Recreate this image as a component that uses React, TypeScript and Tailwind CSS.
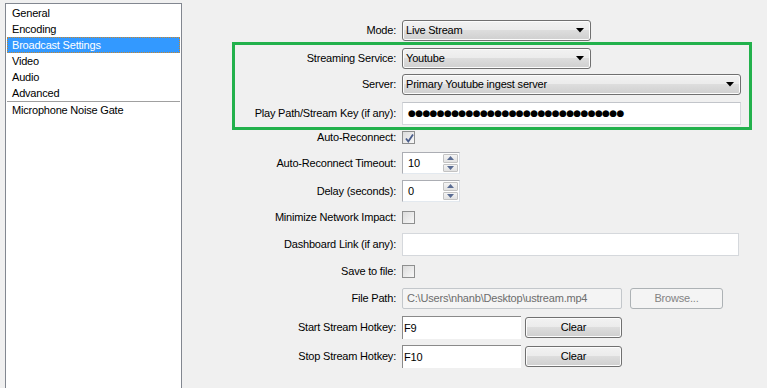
import React from "react";

const items = ["General", "Encoding", "Broadcast Settings", "Video", "Audio", "Advanced"];

function Arrow() {
  return (
    <svg width="8" height="5" viewBox="0 0 8 5">
      <path d="M0 0H8L4 4.5Z" fill="#000" />
    </svg>
  );
}

function Combo({ value, width }: { value: string; width: string }) {
  return (
    <div
      className={`${width} h-[21px] flex items-center justify-between rounded-[3px] border border-[#707070] bg-[linear-gradient(#f2f2f2,#ebebeb_50%,#dddddd_50%,#cfcfcf)] pl-[3px] pr-[6px] shadow-[inset_0_0_0_1px_#fcfcfc]`}
    >
      <span>{value}</span>
      <Arrow />
    </div>
  );
}

function Check({ checked }: { checked?: boolean }) {
  return (
    <div className="w-[13px] h-[13px] border border-[#8e8f8f] bg-[linear-gradient(135deg,#dcdcdc,#f7f7f7)] p-[1px]">
      {checked && (
        <svg width="11" height="11" viewBox="0 0 11 11">
          <path d="M2 5.5L4.3 8.5L9 1.5" stroke="#4a5d8a" strokeWidth="1.8" fill="none" />
        </svg>
      )}
    </div>
  );
}

function SpinBtn({ up }: { up?: boolean }) {
  return (
    <div className="flex-1 flex items-center justify-center border border-[#c3c3c3] rounded-[1px] bg-[linear-gradient(#f4f4f4,#e2e2e2)]">
      <svg width="7" height="4" viewBox="0 0 7 4">
        <path d={up ? "M0 4H7L3.5 0Z" : "M0 0H7L3.5 4Z"} fill="#5a6c93" />
      </svg>
    </div>
  );
}

function Spin({ value }: { value: string }) {
  return (
    <div className="w-[58px] h-[22px] flex border border-[#abadb3] border-b-[#e3e9ef] border-r-[#dbdfe6] bg-white">
      <div className="flex-1 pl-[5px] flex items-center">{value}</div>
      <div className="w-[17px] flex flex-col gap-[1px] p-[1px]">
        <SpinBtn up />
        <SpinBtn />
      </div>
    </div>
  );
}

function Row({
  label,
  wide,
  className,
  children,
}: {
  label: string;
  wide?: boolean;
  className: string;
  children: React.ReactNode;
}) {
  return (
    <div className={`flex items-center ${className}`}>
      <div className={`${wide ? "w-[220px]" : "w-[167px]"} shrink-0 text-right pr-[6px] whitespace-nowrap`}>{label}</div>
      {children}
    </div>
  );
}

function Button({ label, disabled }: { label: string; disabled?: boolean }) {
  return disabled ? (
    <div className="w-[93px] h-[21px] flex items-center justify-center rounded-[3px] border border-[#adb2b5] bg-[#f4f4f4] text-[#838383]">
      {label}
    </div>
  ) : (
    <div className="w-[97px] h-[21px] flex items-center justify-center rounded-[3px] border border-[#707070] bg-[linear-gradient(#f2f2f2,#ebebeb_50%,#dddddd_50%,#cfcfcf)] shadow-[inset_0_0_0_1px_#fcfcfc]">
      {label}
    </div>
  );
}

export default function App() {
  return (
    <div className="w-[767px] h-[388px] overflow-hidden bg-[#f0f0f0] flex font-['Liberation_Sans',sans-serif] text-[11px] tracking-[-0.2px] text-black">
      {/* settings list */}
      <div className="ml-[5px] mt-[3px] w-[177px] h-[400px] shrink-0 border border-b-0 border-[#828790] bg-white pt-[1px] px-[1px]">
        {items.map((it) => (
          <div
            key={it}
            className={`h-[16px] flex items-center pl-[5px] ${
              it === "Broadcast Settings"
                ? "bg-[#3399ff] text-white outline-1 outline-dotted outline-[#c9862b] -outline-offset-1"
                : ""
            }`}
          >
            {it}
          </div>
        ))}
        <div className="h-[1px] bg-[#a0a0a0]" />
        <div className="h-[16px] flex items-center pl-[5px]">Microphone Noise Gate</div>
      </div>

      {/* broadcast settings form */}
      <div className="flex-1 flex flex-col">
        <Row label="Mode:" wide className="mt-[20px] h-[21px]">
          <Combo value="Live Stream" width="w-[189px]" />
        </Row>

        <div className="ml-[50px] mt-[1px] w-[520px] h-[88px] border-[3px] border-[#22b14c] pt-[3px]">
          <Row label="Streaming Service:" className="h-[21px]">
            <Combo value="Youtube" width="w-[189px]" />
          </Row>
          <Row label="Server:" className="mt-[5px] h-[21px]">
            <Combo value="Primary Youtube ingest server" width="w-[339px]" />
          </Row>
          <Row label="Play Path/Stream Key (if any):" className="mt-[7px] h-[23px]">
            <div className="w-[339px] h-[23px] flex items-center pl-[5px] border border-[#d5d8dc] border-t-[#c2c5ca] bg-white">
              {Array.from({ length: 30 }).map((_, i) => (
                <span key={i} className="w-[7.2px] text-center text-[9px] leading-none font-['DejaVu_Sans',sans-serif]">
                  ●
                </span>
              ))}
            </div>
          </Row>
        </div>

        <Row label="Auto-Reconnect:" wide className="mt-[1px] h-[13px]">
          <Check checked />
        </Row>
        <Row label="Auto-Reconnect Timeout:" wide className="mt-[8px] h-[22px]">
          <Spin value="10" />
        </Row>
        <Row label="Delay (seconds):" wide className="mt-[6px] h-[22px]">
          <Spin value="0" />
        </Row>
        <Row label="Minimize Network Impact:" wide className="mt-[9px] h-[13px]">
          <Check />
        </Row>
        <Row label="Dashboard Link (if any):" wide className="mt-[9px] h-[23px]">
          <div className="w-[337px] h-[23px] border border-[#d5d8dc] bg-white" />
        </Row>
        <Row label="Save to file:" wide className="mt-[9px] h-[13px]">
          <Check />
        </Row>
        <Row label="File Path:" wide className="mt-[10px] h-[21px]">
          <div className="w-[220px] h-[21px] flex items-center pl-[4px] rounded-[2px] border border-[#c3c7cb] bg-[#f4f4f4] text-[#6d6d6d]">
            C:\Users\nhanb\Desktop\ustream.mp4
          </div>
          <div className="ml-[8px]">
            <Button label="Browse..." disabled />
          </div>
        </Row>
        <Row label="Start Stream Hotkey:" wide className="mt-[7px] h-[23px]">
          <div className="w-[119px] h-[23px] flex items-center pl-[1px] border-t border-l border-[#8a8a8a] bg-white">F9</div>
          <div className="ml-[4px]">
            <Button label="Clear" />
          </div>
        </Row>
        <Row label="Stop Stream Hotkey:" wide className="mt-[6px] h-[23px]">
          <div className="w-[119px] h-[23px] flex items-center pl-[1px] border-t border-l border-[#8a8a8a] bg-white">F10</div>
          <div className="ml-[4px]">
            <Button label="Clear" />
          </div>
        </Row>
      </div>
    </div>
  );
}
